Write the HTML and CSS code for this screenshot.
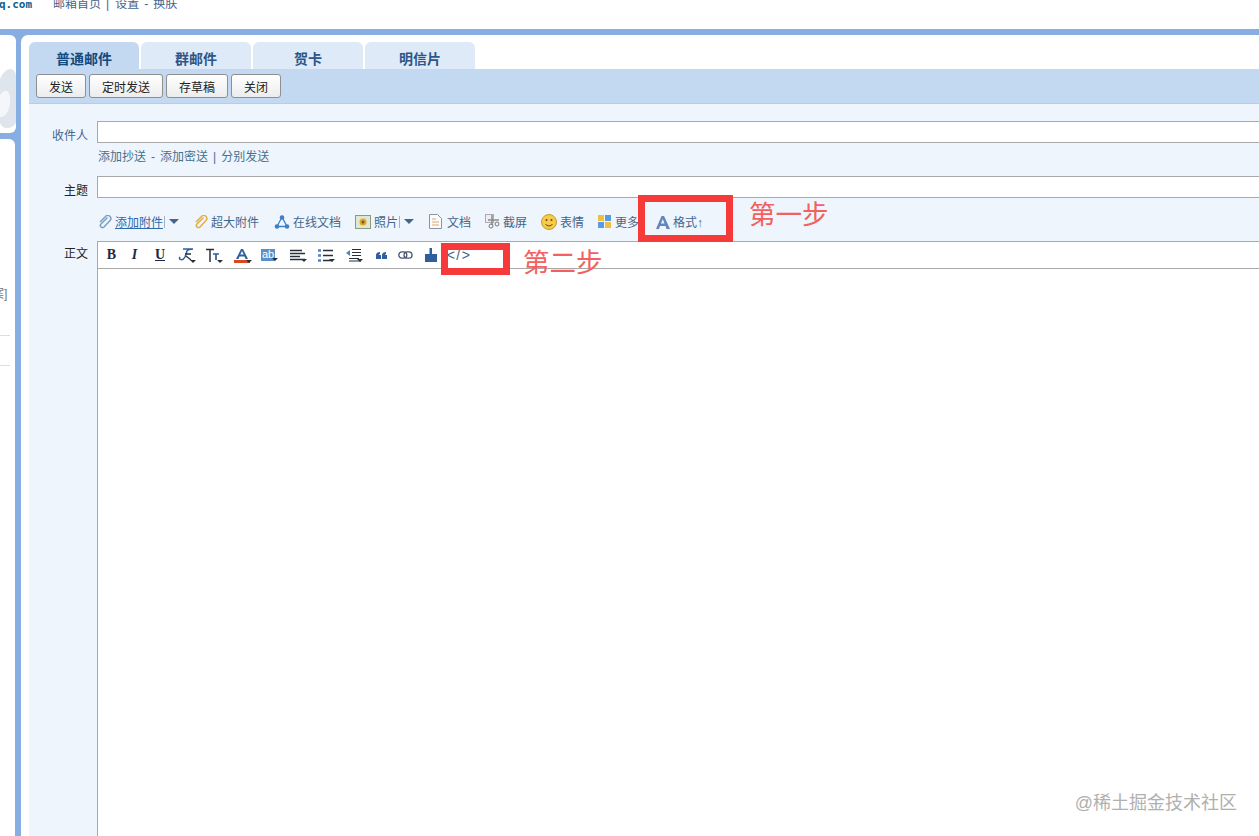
FILE: index.html
```html
<!DOCTYPE html>
<html lang="zh-CN">
<head>
    <meta charset="UTF-8">
    <title>写信</title>
    <link rel="stylesheet" href="styles.css">
</head>
<body>
    <div class="page">
        <div class="top">
            <span class="logo-text">q.com</span>
            <span class="top-links"><span>邮箱首页</span><span>|</span><span>设置</span><span>-</span><span>换肤</span></span>
        </div>
        <div class="frame">
            <div class="side">
                <div class="side-card side-logo">
                    <svg width="16" height="98" viewBox="0 0 16 98"><path d="M0 44C6 30 16 32 16 42V88C10 96 2 94 0 88Z" fill="#dfe5ec"/><path d="M0 60C6 52 11 56 10 68C9 78 4 82 0 82Z" fill="#f4f6f9"/></svg>
                </div>
                <div class="side-card side-list">
                    <div class="side-note">案]</div>
                    <div class="side-line"></div>
                    <div class="side-line second"></div>
                </div>
            </div>
            <div class="main">
                <div class="tabs">
                    <div class="tab active">普通邮件</div>
                    <div class="tab">群邮件</div>
                    <div class="tab">贺卡</div>
                    <div class="tab">明信片</div>
                </div>
                <div class="actions">
                    <button class="btn send">发送</button>
                    <button class="btn timed">定时发送</button>
                    <button class="btn draft">存草稿</button>
                    <button class="btn send">关闭</button>
                </div>
                <div class="form">
                    <div class="row to-row">
                        <label class="row-label blue">收件人</label>
                        <div class="field"></div>
                    </div>
                    <div class="links"><span>添加抄送</span><span>-</span><span>添加密送</span><span>|</span><span>分别发送</span></div>
                    <div class="row subject-row">
                        <label class="row-label">主题</label>
                        <div class="field"></div>
                    </div>
                    <div class="attach-bar">
                        <span class="attach first">
                            <svg width="14" height="14" viewBox="0 0 14 14"><path d="M9.500 2.500 3 9a2 2 0 0 0 3 3l6-6.500a3 3 0 0 0-4.500-4L2 7" fill="none" stroke="#7c9fc4" stroke-width="1.500"/></svg>
                            <u>添加附件</u><i class="sep"></i><i class="down"></i>
                        </span>
                        <span class="attach big">
                            <svg width="14" height="14" viewBox="0 0 14 14"><path d="M9.500 2.500 3 9a2 2 0 0 0 3 3l6-6.500a3 3 0 0 0-4.500-4L2 7" fill="none" stroke="#e0ae45" stroke-width="1.500"/></svg>
                            超大附件
                        </span>
                        <span class="attach doc">
                            <svg width="16" height="16" viewBox="0 0 16 16"><path d="M8 3 3 12.500H13Z" fill="none" stroke="#3f7fc8" stroke-width="1.300"/><circle cx="8" cy="3.500" r="2.300" fill="#3f7fc8"/><circle cx="3" cy="12.500" r="2.300" fill="#3f7fc8"/><circle cx="13" cy="12.500" r="2.300" fill="#3f7fc8"/></svg>
                            在线文档
                        </span>
                        <span class="attach photo">
                            <svg width="16" height="14" viewBox="0 0 16 14"><rect x=".5" y=".5" width="15" height="13" fill="#dfe8d2" stroke="#8a9a84"/><circle cx="8" cy="7" r="3.500" fill="#e2a72a"/><circle cx="8" cy="7" r="1.500" fill="#7a5a1c"/></svg>
                            照片<i class="sep"></i><i class="down"></i>
                        </span>
                        <span class="attach file">
                            <svg width="13" height="15" viewBox="0 0 13 15"><path d="M.5.5H8.500L12.500 4.500V14.500H.5Z" fill="#fbfbfb" stroke="#8b949e"/><path d="M3 5H7M3 8H10M3 11H10" stroke="#e0a96a"/></svg>
                            文档
                        </span>
                        <span class="attach shot">
                            <svg width="16" height="15" viewBox="0 0 16 15"><rect x=".5" y=".5" width="8" height="8" fill="#eee" stroke="#aab"/><path d="M7 1V11M3 6H14" stroke="#8b8b8b" stroke-width="1.500"/><circle cx="6" cy="12" r="2" fill="none" stroke="#777"/><circle cx="12" cy="10" r="2" fill="none" stroke="#777"/></svg>
                            截屏
                        </span>
                        <span class="attach face">
                            <svg width="16" height="16" viewBox="0 0 16 16"><circle cx="8" cy="8" r="7.500" fill="#f6cb4a" stroke="#c99a25"/><circle cx="5.500" cy="6" r="1" fill="#6b4a10"/><circle cx="10.500" cy="6" r="1" fill="#6b4a10"/><path d="M4.500 10C6 12.500 10 12.500 11.500 10" fill="none" stroke="#6b4a10"/></svg>
                            表情
                        </span>
                        <span class="attach more">
                            <svg width="14" height="14" viewBox="0 0 14 14"><rect width="6" height="6" fill="#f2bf3c"/><rect x="7" width="6" height="6" fill="#5a9be0"/><rect y="7" width="6" height="6" fill="#5a9be0"/><rect x="7" y="7" width="6" height="6" fill="#f2bf3c"/></svg>
                            更多
                        </span>
                        <span class="attach format">
                            <svg width="16" height="14" viewBox="0 0 16 14"><path d="M1 14 6.500 1H9L15 14H11.500L10.500 11H5L4 14ZM6 8.500H9.500L7.800 4Z" fill="#6187bd"/></svg>
                            格式↑
                        </span>
                    </div>
                    <div class="editor-row">
                        <label class="row-label">正文</label>
                        <div class="editor">
                            <div class="editor-tools">
                                <b class="tool t-b">B</b>
                                <i class="tool t-i">I</i>
                                <u class="tool t-u">U</u>
                                <span class="tool t-f"><svg width="18" height="15" viewBox="0 0 18 15"><path d="M3 9C1 12 6 13 8 9L10 3C11 1 13 1 16 1H6" fill="none" stroke="#2f5f9f" stroke-width="1.500"/><path d="M8 6H14M9 8 14 12" stroke="#26303c" stroke-width="1.300"/></svg><em class="caret"></em></span>
                                <span class="tool t-t"><svg width="17" height="15" viewBox="0 0 17 15"><path d="M1 1.500H9M5 1.500V14" stroke="#26303c" stroke-width="1.500"/><path d="M8 6H14M11 6V12" stroke="#2f5f9f" stroke-width="1.700"/></svg><em class="caret"></em></span>
                                <span class="tool t-a"><svg width="16" height="15" viewBox="0 0 16 15"><path d="M2 11 7 1H9L14 11H11.500L10.500 8.500H5.500L4.500 11ZM6.300 6.500H9.700L8 3Z" fill="#2f5f9f"/><rect y="12" width="16" height="3" fill="#d9481f"/></svg><em class="caret"></em></span>
                                <span class="tool t-ab"><span class="ab">ab</span><em class="caret"></em></span>
                                <span class="tool t-al"><svg width="15" height="13" viewBox="0 0 15 13"><path d="M0 1.500H12M0 4.500H15M0 7.500H10M0 10.500H15" stroke="#26303c" stroke-width="1.300"/></svg><em class="caret"></em></span>
                                <span class="tool t-ul"><svg width="15" height="13" viewBox="0 0 15 13"><path d="M5 1.500H15M5 6.500H15M5 11.500H15" stroke="#26303c" stroke-width="1.300"/><path d="M0 1.500H3M0 6.500H3M0 11.500H3" stroke="#4c86c8" stroke-width="2.500"/></svg><em class="caret"></em></span>
                                <span class="tool t-in"><svg width="15" height="14" viewBox="0 0 15 14"><path d="M6 1.500H15M6 4.500H15M6 7.500H15M3 10.500H13M3 13H15" stroke="#26303c" stroke-width="1.200"/><path d="M4 2 0 5 4 8Z" fill="#4c86c8"/></svg><em class="caret"></em></span>
                                <span class="tool t-q"><svg width="11" height="7" viewBox="0 0 11 7"><path d="M0 3C0 1 2 0 4 0V2C3 2 3 3 3 3H5V7H0ZM6 3C6 1 8 0 10 0V2C9 2 9 3 9 3H11V7H6Z" fill="#2f5f9f"/></svg></span>
                                <span class="tool t-l"><svg width="15" height="8" viewBox="0 0 15 8"><rect x=".8" y=".8" width="8" height="6.400" rx="3.200" fill="none" stroke="#44546a" stroke-width="1.300"/><rect x="6" y=".8" width="8" height="6.400" rx="3.200" fill="none" stroke="#44546a" stroke-width="1.300"/></svg></span>
                                <span class="tool t-br"><svg width="12" height="15" viewBox="0 0 12 15"><path d="M4.500 0H7V6H12V14H0V6H4.500Z" fill="#2f5f9f"/></svg></span>
                                <span class="tool t-src">&lt;/&gt;</span>
                            </div>
                            <div class="editor-body"></div>
                        </div>
                    </div>
                </div>
            </div>
        </div>

        <div class="mark mark-one"></div>
        <div class="mark mark-two"></div>
        <div class="step step-one">第一步</div>
        <div class="step step-two">第二步</div>
        <div class="watermark">@稀土掘金技术社区</div>
    </div>
</body>
</html>
```

FILE: styles.css
```css
* {
    box-sizing: border-box;
}
html, body {
    margin: 0;
    height: 100%;
    overflow: hidden;
}
body {
    font-family: "Liberation Sans", "Noto Sans CJK SC", sans-serif;
    font-size: 12px;
    color: #1e3a5c;
    background-color: white;
}
.page {
    position: relative;
    display: flex;
    flex-direction: column;
    width: 1259px;
    height: 836px;
    overflow: hidden;
}
.top {
    display: flex;
    align-items: flex-start;
    height: 29px;
    margin-top: -4px;
    flex: none;
}
.logo-text {
    margin-left: -1px;
    width: 54px;
    padding-top: 1px;
    font-family: "DejaVu Sans Mono", "Liberation Mono", monospace;
    font-size: 11px;
    font-weight: bold;
    line-height: 16px;
    color: #0d6292;
}
.top-links {
    display: flex;
    gap: 5px;
    line-height: 16px;
    color: #45658c;
}
.top-links span:nth-child(3) {
    margin-left: 1px;
}
.frame {
    display: flex;
    flex: 1;
    min-height: 0;
    margin-top: 4px;
    padding-top: 6px;
    background-color: #86aee2;
}
.side {
    display: flex;
    flex-direction: column;
    gap: 6px;
    width: 16px;
    flex: none;
}
.side-card {
    background-color: white;
    border-radius: 0 6px 6px 0;
    overflow: hidden;
}
.side-logo {
    height: 98px;
}
.side-logo svg {
    display: block;
}
.side-list {
    flex: 1;
    padding-top: 147px;
    width: 15px;
    border-radius: 0 6px 0 0;
}
.side-note {
    margin-left: -8px;
    line-height: 16px;
    color: #777;
    white-space: nowrap;
}
.side-line {
    width: 10px;
    height: 1px;
    margin-top: 33px;
    background-color: #ddd;
}
.side-line.second {
    margin-top: 29px;
}
.main {
    flex: 1;
    min-width: 0;
    display: flex;
    flex-direction: column;
    margin-left: 5px;
    padding: 7px 0 0 8px;
    background-color: white;
    border-radius: 7px 0 0 0;
}
.tabs {
    display: flex;
    gap: 2px;
    height: 27px;
    flex: none;
}
.tab {
    width: 110px;
    padding-top: 7px;
    font-size: 14px;
    font-weight: bold;
    line-height: 20px;
    text-align: center;
    color: #2c5688;
    background-color: #deeaf7;
    border-radius: 6px 6px 0 0;
}
.tab.active {
    color: #134a80;
    background-color: #c3d9f1;
}
.actions {
    display: flex;
    gap: 3px;
    height: 35px;
    flex: none;
    padding: 5px 0 0 7px;
    background-color: #c3d9f1;
    border-bottom: 1px solid #b6cde8;
}
.btn {
    height: 24px;
    padding: 0;
    font-family: inherit;
    font-size: 12px;
    color: #222;
    background: linear-gradient(#ffffff, #ececec);
    border: 1px solid #8f8f8f;
    border-radius: 3px;
}
.btn.send {
    width: 50px;
}
.btn.timed {
    width: 74px;
}
.btn.draft {
    width: 62px;
}
.form {
    flex: 1;
    min-height: 0;
    display: flex;
    flex-direction: column;
    padding-top: 17px;
    background-color: #eff5fd;
}
.row {
    display: flex;
    height: 22px;
    flex: none;
}
.row-label {
    width: 68px;
    flex: none;
    padding: 6px 9px 0 0;
    line-height: 18px;
    text-align: right;
    color: #222;
}
.row-label.blue {
    color: #46658a;
}
.editor-row .row-label {
    padding-top: 4px;
}
.field {
    flex: 1;
    background-color: white;
    border: 1px solid #a9a9a9;
    border-right: none;
}
.links {
    display: flex;
    gap: 5px;
    height: 33px;
    flex: none;
    padding: 5px 0 0 69px;
    line-height: 18px;
    color: #46708f;
}
.attach-bar {
    display: flex;
    align-items: center;
    height: 43px;
    flex: none;
    padding: 4px 0 0 69px;
    color: #46658a;
}
.attach {
    display: flex;
    align-items: center;
    gap: 3px;
    flex: none;
    white-space: nowrap;
}
.attach u {
    color: #2f6aa8;
}
.attach.first {
    width: 96px;
}
.attach.big {
    width: 80px;
}
.attach.doc {
    width: 81px;
}
.attach.photo {
    width: 74px;
}
.attach.file {
    width: 56px;
    gap: 5px;
}
.attach.shot {
    width: 56px;
    gap: 2px;
}
.attach.face {
    width: 57px;
}
.attach.more {
    width: 57px;
}
.attach.format {
    gap: 2px;
}
.sep {
    width: 1px;
    height: 12px;
    margin-left: -2px;
    background-color: #9fb4cc;
}
.down {
    width: 0;
    height: 0;
    margin-left: 1px;
    border-left: 5px solid transparent;
    border-right: 5px solid transparent;
    border-top: 5px solid #46658a;
}
.editor-row {
    display: flex;
    flex: 1;
    min-height: 0;
}
.editor {
    flex: 1;
    display: flex;
    flex-direction: column;
    background-color: white;
    border-top: 1px solid #a9a9a9;
    border-left: 1px solid #a9a9a9;
}
.editor-tools {
    display: flex;
    align-items: center;
    height: 27px;
    flex: none;
    padding-left: 6px;
    border-bottom: 1px solid #a9a9a9;
}
.tool {
    position: relative;
    display: flex;
    align-items: center;
    justify-content: center;
    flex: none;
    font-family: "Liberation Serif", serif;
    font-size: 14px;
    font-weight: bold;
    color: #1c2c40;
    text-decoration-thickness: 1px;
}
.t-b { width: 15px; margin-right: 9px; }
.t-i { width: 13px; margin-right: 13px; }
.t-u { width: 12px; margin-right: 10px; }
.t-f { width: 20px; margin-right: 7px; }
.t-t { width: 20px; margin-right: 9px; }
.t-a { width: 20px; margin-right: 6px; }
.t-ab { width: 20px; margin-right: 9px; }
.t-al { width: 20px; margin-right: 8px; }
.t-ul { width: 20px; margin-right: 8px; }
.t-in { width: 20px; margin-right: 12px; }
.t-q { width: 12px; margin-right: 10px; }
.t-l { width: 16px; margin-right: 12px; }
.t-br { width: 12px; margin-right: 10px; }
.t-src {
    width: 24px;
    font-family: "Liberation Sans", sans-serif;
    font-size: 14px;
    font-weight: normal;
    letter-spacing: 1.500px;
    color: #45658c;
}
.ab {
    display: block;
    width: 14px;
    height: 12px;
    font-family: "Liberation Sans", sans-serif;
    font-size: 11px;
    font-weight: normal;
    line-height: 11px;
    text-align: center;
    color: white;
    background-color: #5b8fcb;
}
.caret {
    position: absolute;
    right: 0;
    bottom: 0;
    width: 0;
    height: 0;
    border-left: 3px solid transparent;
    border-right: 3px solid transparent;
    border-top: 3px solid #26303c;
}
.editor-body {
    flex: 1;
}
.mark {
    position: absolute;
    border: 7px solid #f63a3a;
}
.mark-one {
    left: 638px;
    top: 195px;
    width: 95px;
    height: 47px;
}
.mark-two {
    left: 441px;
    top: 243px;
    width: 69px;
    height: 32px;
}
.step {
    position: absolute;
    font-family: "Liberation Serif", "Noto Sans CJK SC", serif;
    font-size: 26.500px;
    line-height: 32px;
    color: #f2605f;
}
.step-one {
    left: 749px;
    top: 199px;
}
.step-two {
    left: 523px;
    top: 247px;
}
.watermark {
    position: absolute;
    right: 22px;
    top: 792px;
    font-size: 18px;
    line-height: 22px;
    color: #b0b0b0;
}
```
